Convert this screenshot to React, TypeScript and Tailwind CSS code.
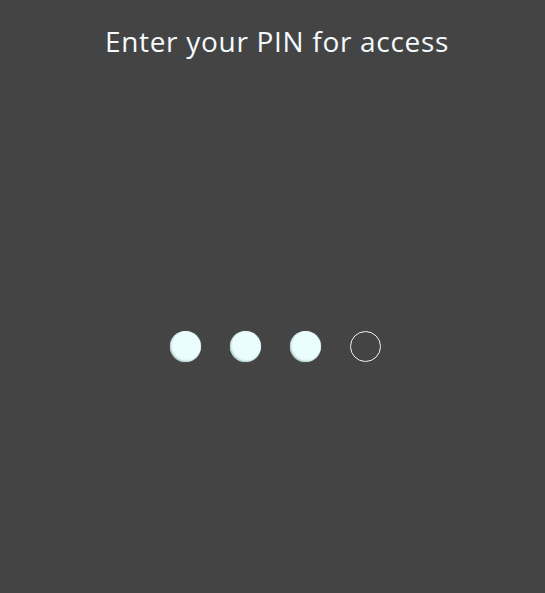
export default function App() {
  const filled = 3;
  return (
    <div className="flex h-[593px] w-full flex-col items-center bg-[#444444] font-['Open_Sans',sans-serif] text-white">
      <h1 className="mt-[22px] pl-[9px] text-[28px] font-normal leading-[38px] tracking-[0.7px] text-[#f4fbff]">
        Enter your PIN for access
      </h1>
      <div className="mt-[271px] flex items-center gap-[29px] pl-[5px]">
        {[0, 1, 2, 3].map((i) =>
          i < filled ? (
            <div
              key={i}
              className="h-[31px] w-[31px] rounded-full bg-[#ebfefe] shadow-[inset_1px_-1px_2px_rgba(140,170,170,0.6),0_0_1px_rgba(200,230,230,0.6)]"
            />
          ) : (
            <div
              key={i}
              className="h-[31px] w-[31px] rounded-full border border-[#f2f2f2]"
            />
          )
        )}
      </div>
    </div>
  );
}
